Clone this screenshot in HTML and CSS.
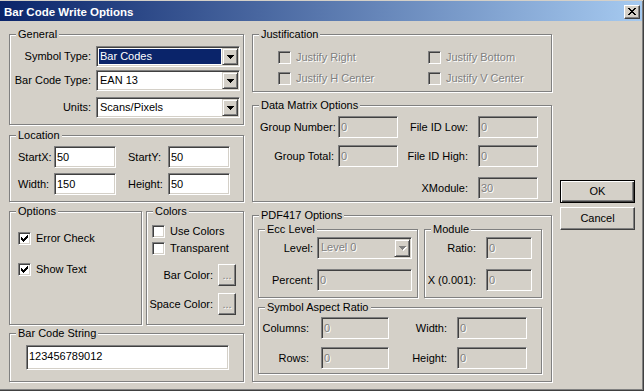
FILE: index.html
```html
<!DOCTYPE html>
<html lang="en">
<head>
  <meta charset="utf-8">
  <title>Bar Code Write Options</title>
  <link rel="stylesheet" href="styles.css">
</head>
<body>
  <div class="dialog">
    <div class="frame">
      <div class="titlebar">
        <span class="title">Bar Code Write Options</span>
        <span class="close">
          <svg width="8" height="7" viewBox="0 0 8 7"><path d="M0 0h2v1H0zM6 0h2v1H6zM1 1h2v1H1zM5 1h2v1H5zM2 2h4v1H2zM3 3h2v1H3zM2 4h4v1H2zM1 5h2v1H1zM5 5h2v1H5zM0 6h2v1H0zM6 6h2v1H6z"/></svg>
        </span>
      </div>

      <form class="client" autocomplete="off">
        <div class="col-left">
          <div class="group general">
            <div class="legend">General</div>
            <div class="general-grid">
              <label>Symbol Type:</label>
              <div class="combo">
                <span class="combo-value"><span class="selected">Bar Codes</span></span>
                <span class="drop"><svg width="7" height="4" viewBox="0 0 7 4"><path d="M0 0h7v1H0zM1 1h5v1H1zM2 2h3v1H2zM3 3h1v1H3z"/></svg></span>
              </div>
              <label>Bar Code Type:</label>
              <div class="combo">
                <span class="combo-value"><span>EAN 13</span></span>
                <span class="drop"><svg width="7" height="4" viewBox="0 0 7 4"><path d="M0 0h7v1H0zM1 1h5v1H1zM2 2h3v1H2zM3 3h1v1H3z"/></svg></span>
              </div>
              <label>Units:</label>
              <div class="combo">
                <span class="combo-value"><span>Scans/Pixels</span></span>
                <span class="drop"><svg width="7" height="4" viewBox="0 0 7 4"><path d="M0 0h7v1H0zM1 1h5v1H1zM2 2h3v1H2zM3 3h1v1H3z"/></svg></span>
              </div>
            </div>
          </div>

          <div class="group location">
            <div class="legend">Location</div>
            <div class="location-grid">
              <label>StartX:</label><input class="edit" type="text" value="50">
              <label>StartY:</label><input class="edit" type="text" value="50">
              <label>Width:</label><input class="edit" type="text" value="150">
              <label>Height:</label><input class="edit" type="text" value="50">
            </div>
          </div>

          <div class="pair">
            <div class="group options">
              <div class="legend">Options</div>
              <div class="check-row">
                <span class="check"><svg width="7" height="7" viewBox="0 0 7 7"><path d="M6 0h1v1H6zM5 1h2v1H5zM0 2h1v1H0zM4 2h3v1H4zM0 3h2v1H0zM3 3h3v1H3zM0 4h5v1H0zM1 5h3v1H1zM2 6h1v1H2z"/></svg></span>
                <span>Error Check</span>
              </div>
              <div class="check-row">
                <span class="check"><svg width="7" height="7" viewBox="0 0 7 7"><path d="M6 0h1v1H6zM5 1h2v1H5zM0 2h1v1H0zM4 2h3v1H4zM0 3h2v1H0zM3 3h3v1H3zM0 4h5v1H0zM1 5h3v1H1zM2 6h1v1H2z"/></svg></span>
                <span>Show Text</span>
              </div>
            </div>

            <div class="group colors">
              <div class="legend">Colors</div>
              <div class="check-row"><span class="check"></span><span>Use Colors</span></div>
              <div class="check-row"><span class="check"></span><span>Transparent</span></div>
              <div class="color-row">
                <label>Bar Color:</label>
                <button class="btn small" type="button" disabled>...</button>
              </div>
              <div class="color-row">
                <label>Space Color:</label>
                <button class="btn small" type="button" disabled>...</button>
              </div>
            </div>
          </div>

          <div class="group barcode-string">
            <div class="legend">Bar Code String</div>
            <input class="edit string" type="text" value="123456789012">
          </div>
        </div>

        <div class="col-right">
          <div class="group justification">
            <div class="legend">Justification</div>
            <div class="justify-grid">
              <div class="check-row disabled"><span class="check off"></span><span>Justify Right</span></div>
              <div class="check-row disabled"><span class="check off"></span><span>Justify Bottom</span></div>
              <div class="check-row disabled"><span class="check off"></span><span>Justify H Center</span></div>
              <div class="check-row disabled"><span class="check off"></span><span>Justify V Center</span></div>
            </div>
          </div>

          <div class="group data-matrix">
            <div class="legend">Data Matrix Options</div>
            <div class="matrix-grid">
              <label>Group Number:</label><input class="edit" type="text" value="0" disabled>
              <label class="far">File ID Low:</label><input class="edit" type="text" value="0" disabled>
              <label>Group Total:</label><input class="edit" type="text" value="0" disabled>
              <label class="far">File ID High:</label><input class="edit" type="text" value="0" disabled>
              <label class="far xmodule">XModule:</label><input class="edit" type="text" value="30" disabled>
            </div>
          </div>

          <div class="group pdf417">
            <div class="legend">PDF417 Options</div>
            <div class="pdf-top">
              <div class="group ecc">
                <div class="legend">Ecc Level</div>
                <div class="ecc-grid">
                  <label>Level:</label>
                  <div class="combo off">
                    <span class="combo-value"><span class="disabled">Level 0</span></span>
                    <span class="drop"><svg width="8" height="5" viewBox="0 0 8 5"><path fill="#fff" d="M1 1h7v1H1zM2 2h5v1H2zM3 3h3v1H3zM4 4h1v1H4z"/><path fill="#808080" d="M0 0h7v1H0zM1 1h5v1H1zM2 2h3v1H2zM3 3h1v1H3z"/></svg></span>
                  </div>
                  <label>Percent:</label><input class="edit" type="text" value="0" disabled>
                </div>
              </div>

              <div class="group module">
                <div class="legend">Module</div>
                <div class="module-grid">
                  <label>Ratio:</label><input class="edit" type="text" value="0" disabled>
                  <label>X (0.001):</label><input class="edit" type="text" value="0" disabled>
                </div>
              </div>
            </div>

            <div class="group aspect">
              <div class="legend">Symbol Aspect Ratio</div>
              <div class="aspect-grid">
                <label>Columns:</label><input class="edit" type="text" value="0" disabled>
                <label class="far">Width:</label><input class="edit" type="text" value="0" disabled>
                <label>Rows:</label><input class="edit" type="text" value="0" disabled>
                <label class="far">Height:</label><input class="edit" type="text" value="0" disabled>
              </div>
            </div>
          </div>
        </div>

        <div class="col-buttons">
          <button class="btn default" type="button">OK</button>
          <button class="btn" type="button">Cancel</button>
        </div>
      </form>
    </div>
  </div>
</body>
</html>
```

FILE: styles.css
```css
*, :after, :before {
  box-sizing: border-box;
}

html, body {
  margin: 0;
  padding: 0;
}

body {
  background-color: #d4d0c8;
  color: #000;
  font-family: "Liberation Sans", Arial, sans-serif;
  font-size: 11px;
  line-height: 13px;
}

label {
  white-space: nowrap;
}

/* window frame */

.dialog {
  width: 644px;
  height: 391px;
  padding-top: 1px;
  border-right: 1px solid #404040;
  border-bottom: 1px solid #404040;
}

.frame {
  height: 100%;
  border-right: 1px solid #808080;
  border-bottom: 1px solid #808080;
}

.titlebar {
  display: flex;
  justify-content: space-between;
  align-items: flex-start;
  height: 20px;
  padding: 0 2px 0 4px;
  background: linear-gradient(to right, #0a246a, #a6caf0);
}

.title {
  margin-top: 5px;
  color: #fff;
  font-size: 11.5px;
  font-weight: bold;
}

.close {
  display: flex;
  align-items: center;
  justify-content: center;
  width: 16px;
  height: 14px;
  margin-top: 4px;
  padding-bottom: 1px;
  border: 1px solid;
  border-color: #fff #404040 #404040 #fff;
  background-color: #d4d0c8;
  box-shadow: inset -1px -1px #808080;
}

.close svg, .drop svg, .check svg {
  display: block;
}

/* columns */

.client {
  display: flex;
  align-items: flex-start;
  margin: 0;
}

.col-left {
  flex: none;
  width: 235px;
  margin-left: 9px;
}

.col-right {
  flex: none;
  width: 300px;
  margin-left: 8px;
}

.col-buttons {
  flex: none;
  width: 75px;
  margin-left: 8px;
  padding-top: 159px;
}

.col-buttons .btn + .btn {
  margin-top: 4px;
}

/* group boxes */

.group {
  border: 1px solid #808080;
  box-shadow: inset 1px 1px #fff, 1px 1px #fff;
}

.legend {
  display: table;
  margin: -7px 0 0 6px;
  padding: 0 2px;
  background-color: #d4d0c8;
}

/* controls */

.combo {
  display: flex;
  height: 21px;
  padding: 1px;
  border: 1px solid;
  border-color: #808080 #fff #fff #808080;
  background-color: #fff;
  box-shadow: inset 1px 1px #404040, inset -1px -1px #d4d0c8;
}

.combo.off {
  height: 22px;
  background-color: #d4d0c8;
}

.combo-value {
  flex: 1;
  padding: 1px;
  line-height: 15px;
}

.combo-value span {
  display: block;
  padding: 0 1px;
}

.combo-value .selected {
  background-color: #0a246a;
  color: #fff;
}

.drop {
  flex: none;
  width: 16px;
  padding: 6px 0 0 4px;
  border: 1px solid;
  border-color: #d4d0c8 #404040 #404040 #d4d0c8;
  background-color: #d4d0c8;
  box-shadow: inset 1px 1px #fff, inset -1px -1px #808080;
}

.edit {
  display: block;
  width: 100%;
  height: 22px;
  margin: 0;
  padding: 0 2px;
  border: 1px solid;
  border-color: #808080 #fff #fff #808080;
  background-color: #fff;
  box-shadow: inset 1px 1px #404040, inset -1px -1px #d4d0c8;
  color: #000;
  font: inherit;
  outline: none;
}

.edit:disabled {
  background-color: #d4d0c8;
  color: #808080;
  text-shadow: 1px 1px #fff;
}

.check-row {
  display: flex;
  align-items: center;
  gap: 5px;
}

.check {
  flex: none;
  width: 13px;
  height: 13px;
  padding: 2px;
  border: 1px solid;
  border-color: #808080 #fff #fff #808080;
  background-color: #fff;
  box-shadow: inset 1px 1px #404040, inset -1px -1px #d4d0c8;
}

.check.off {
  background-color: #d4d0c8;
}

.disabled {
  color: #808080;
  text-shadow: 1px 1px #fff;
}

.btn {
  display: flex;
  align-items: center;
  justify-content: center;
  width: 75px;
  height: 23px;
  margin: 0;
  padding: 0;
  border: 1px solid;
  border-color: #fff #404040 #404040 #fff;
  background-color: #d4d0c8;
  box-shadow: inset -1px -1px #808080;
  color: #000;
  font: inherit;
}

.btn.default {
  border-color: #000;
  box-shadow: inset 1px 1px #fff, inset -1px -1px #404040, inset -2px -2px #808080;
}

.btn.small {
  width: 18px;
  height: 22px;
  color: #808080;
  text-shadow: 1px 1px #fff;
}

/* General */

.general {
  height: 91px;
  margin-top: 13px;
}

.general-grid {
  display: grid;
  grid-template-columns: 81px 144px;
  grid-template-rows: 24px 27px 21px;
  column-gap: 5px;
  align-items: start;
  margin-top: 5px;
}

.general-grid label {
  line-height: 21px;
  text-align: right;
}

/* Location */

.location {
  height: 67px;
  margin-top: 10px;
}

.location-grid {
  display: grid;
  grid-template-columns: 36px 74px 40px 62px;
  grid-template-rows: 27px 22px;
  align-items: start;
  margin: 4px 0 0 8px;
}

.location-grid label {
  line-height: 22px;
}

.location-grid .edit {
  width: 62px;
}

/* Options / Colors */

.pair {
  display: flex;
  gap: 4px;
  margin-top: 9px;
}

.options {
  width: 133px;
  height: 114px;
}

.options .check-row {
  margin: 14px 0 0 8px;
}

.options .check-row + .check-row {
  margin-top: 18px;
}

.colors {
  width: 98px;
  height: 114px;
}

.colors .check-row {
  margin: 7px 0 0 5px;
}

.colors .check-row + .check-row {
  margin-top: 4px;
}

.color-row {
  display: flex;
  justify-content: flex-end;
  align-items: center;
  gap: 5px;
  margin-top: 9px;
  padding-right: 7px;
}

.color-row + .color-row {
  margin-top: 7px;
}

/* Bar Code String */

.barcode-string {
  height: 49px;
  margin-top: 8px;
}

.edit.string {
  width: 203px;
  height: 25px;
  margin: 5px 0 0 16px;
  padding: 2px 2px 6px;
}

/* Justification */

.justification {
  height: 58px;
  margin-top: 13px;
}

.justify-grid {
  display: grid;
  grid-template-columns: 150px 1fr;
  row-gap: 8px;
  margin: 10px 0 0 25px;
}

/* Data Matrix */

.data-matrix {
  height: 97px;
  margin-top: 13px;
}

.matrix-grid {
  display: grid;
  grid-template-columns: 78px 60px 80px 60px;
  grid-template-rows: 29px 32px 22px;
  align-items: start;
  margin: 4px 0 0 7px;
}

.matrix-grid label, .ecc-grid label, .module-grid label, .aspect-grid label {
  line-height: 22px;
  text-align: right;
  padding-right: 4px;
}

.matrix-grid .far {
  padding-right: 10px;
}

.matrix-grid .xmodule {
  grid-column: 3;
}

/* PDF417 */

.pdf417 {
  height: 167px;
  margin-top: 13px;
}

.pdf-top {
  display: flex;
  gap: 6px;
  margin-top: 7px;
  padding-left: 5px;
}

.ecc {
  width: 160px;
  height: 69px;
}

.ecc-grid {
  display: grid;
  grid-template-columns: 58px 95px;
  grid-template-rows: 32px 22px;
  align-items: start;
  margin-top: 1px;
}

.module {
  width: 118px;
  height: 69px;
}

.module-grid {
  display: grid;
  grid-template-columns: 61px 46px;
  grid-template-rows: 32px 22px;
  align-items: start;
  margin-top: 1px;
}

.module-grid label {
  padding-right: 10px;
}

.aspect {
  width: 284px;
  height: 67px;
  margin: 9px 0 0 5px;
}

.aspect-grid {
  display: grid;
  grid-template-columns: 62px 68px 68px 70px;
  grid-template-rows: 30px 22px;
  align-items: start;
  margin-top: 3px;
}

.aspect-grid label {
  padding-right: 12px;
}

.aspect-grid .far {
  padding-right: 10px;
}
```
